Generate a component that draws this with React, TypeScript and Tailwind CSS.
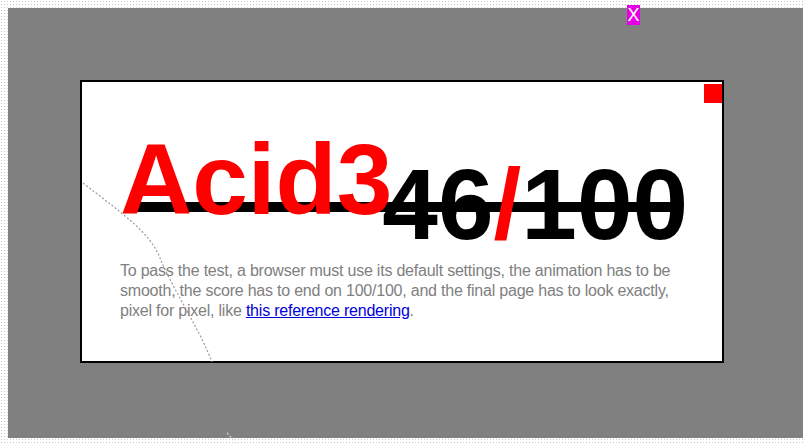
export default function App() {
  return (
    <div
      className="relative w-[803px] h-[445px] overflow-hidden bg-white bg-[radial-gradient(#c8c8c8_0.6px,transparent_0.8px)] bg-[length:3px_3px] pt-[8px] pl-[8px]"
      style={{ fontFamily: '"Liberation Sans", Arial, sans-serif' }}
    >
      {/* gray page area */}
      <div className="w-[795px] h-[430px] bg-[#808080] pt-[72px] pl-[72px]">
        {/* white test box */}
        <div className="relative w-[644px] h-[283px] border-2 border-black bg-white pl-[38px] pt-[47px]">
          {/* strike bar behind the headline */}
          <div className="absolute left-[53px] top-[120px] w-[547px] h-[10px] bg-black" />

          {/* red marker */}
          <div className="absolute right-0 top-[2px] w-[18px] h-[19px] bg-[#ff0000]" />

          <div className="relative flex items-start h-[100px]">
            <span className="text-[100px] leading-[100px] font-bold text-[#ff0000]">Acid3</span>
            <span className="ml-[-10px] mt-[25px] text-[100px] leading-[100px] font-bold text-black whitespace-nowrap">
              46<span className="text-[#ff0000]">/</span>100
            </span>
          </div>

          <p className="relative mt-[32px] text-[16px] leading-[20px] tracking-[-0.22px] text-[#808080] whitespace-nowrap">
            To pass the test, a browser must use its default settings, the animation has to be
            <br />
            smooth, the score has to end on 100/100, and the final page has to look exactly,
            <br />
            pixel for pixel, like <a href="#" className="text-[#0000dd] underline">this reference rendering</a>.
          </p>
        </div>
      </div>

      {/* leftover dotted curve */}
      <svg className="absolute left-0 top-0 pointer-events-none" width="803" height="445" viewBox="0 0 803 445">
        <path
          d="M83 183 C120 212 150 232 160 258 S200 330 212 362"
          fill="none"
          stroke="#9a9a9a"
          strokeWidth="1.2"
          strokeDasharray="2 2"
        />
        <path d="M227 433 L238 445" fill="none" stroke="#d8d8d8" strokeWidth="1.2" strokeDasharray="2 2" />
      </svg>

      {/* close button */}
      <div className="absolute left-[627px] top-[5px] w-[13px] h-[20px] bg-[#e600e6] text-white text-[18px] leading-[20px] text-center">
        X
      </div>
    </div>
  );
}
